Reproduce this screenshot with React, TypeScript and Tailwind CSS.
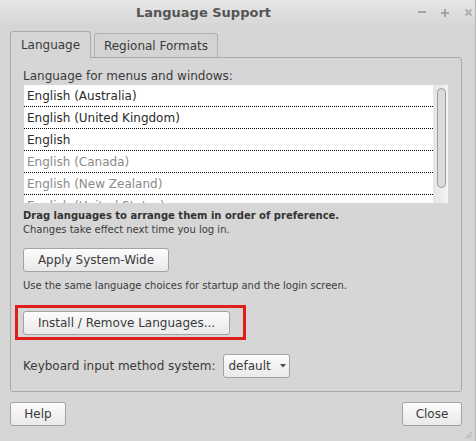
import React from 'react';

const languages = [
    { name: 'English (Australia)', active: true },
    { name: 'English (United Kingdom)', active: true },
    { name: 'English', active: true },
    { name: 'English (Canada)', active: false },
    { name: 'English (New Zealand)', active: false },
    { name: 'English (United States)', active: false },
];

function GtkButton({ children, className = '' }: { children: React.ReactNode; className?: string }) {
    return (
        <button
            type="button"
            className={`h-[24px] rounded-[3px] border border-[#a3a3a3] bg-gradient-to-b from-[#fcfcfc] to-[#e9e9e9] text-[12px] text-[#3a3a3a] leading-none ${className}`}
        >
            {children}
        </button>
    );
}

export default function App() {
    return (
        <div
            className="w-[476px] h-[441px] bg-[#d6d6d6] border-r border-[#b4b4b4] flex flex-col text-[#3c3c3c] overflow-hidden"
            style={{ fontFamily: '"DejaVu Sans", "Liberation Sans", sans-serif' }}
        >
            {/* Title bar */}
            <div className="h-[26px] flex items-center bg-gradient-to-b from-[#e6e6e6] to-[#d6d6d6] shrink-0">
                <div className="flex-1 text-center text-[13px] font-bold text-[#555] pl-[2px]">Language Support</div>
                <div className="flex items-center w-[70px] h-full">
                    <svg width="70" height="26" viewBox="0 0 70 26">
                        <rect x="13" y="11" width="8" height="2" fill="#a4a4a4" />
                        <rect x="36" y="12" width="8" height="2" fill="#a4a4a4" />
                        <rect x="39" y="9" width="2" height="8" fill="#a4a4a4" />
                        <path d="M60.5 9.5 L66.5 15.5 M66.5 9.5 L60.5 15.5" stroke="#b0b0b0" strokeWidth="2" />
                    </svg>
                </div>
            </div>

            <div className="flex flex-col pl-[10px] pr-[13px]">
                {/* Tabs */}
                <div className="flex items-end mt-[5px] h-[26px]">
                    <div className="h-[27px] -mb-[1px] relative z-10 w-[81px] rounded-t-[3px] border border-b-0 border-[#a9a9a9] bg-[#d6d6d6] flex items-center justify-center text-[12px] text-[#3a3a3a]">
                        Language
                    </div>
                    <div className="ml-[3px] h-[24px] w-[124px] rounded-t-[3px] border border-b-0 border-[#b0b0b0] bg-[#d3d3d3] flex items-center justify-center text-[12px] text-[#3a3a3a]">
                        Regional Formats
                    </div>
                </div>

                {/* Panel */}
                <div className="h-[335px] rounded-b-[3px] rounded-tr-[3px] border border-[#a9a9a9] flex flex-col pl-[12px] pr-[13px]">
                    <div className="mt-[11px] text-[12px] leading-[15px] text-[#3a3a3a]">Language for menus and windows:</div>
                    <div className="mt-[1px] ml-[1px] h-[118px] flex overflow-hidden">
                        <div className="flex-1 bg-white overflow-hidden">
                            {languages.map((lang) => (
                                <div
                                    key={lang.name}
                                    className={`h-[22px] shrink-0 border-b border-dotted border-black pl-[3px] flex items-center text-[12px] ${lang.active ? 'text-[#2a2a2a]' : 'text-[#8a8a8a]'}`}
                                >
                                    {lang.name}
                                </div>
                            ))}
                        </div>
                        <div className="w-[15px] bg-gradient-to-r from-[#e4e4e4] to-[#f4f4f4] pt-[3px] pl-[4px]">
                            <div className="w-[9px] h-[100px] rounded-full border border-[#9a9a9a] bg-[#dcdcdc]" />
                        </div>
                    </div>

                    <div className="mt-[6px] text-[10px] leading-[14px] font-bold text-[#333]">
                        Drag languages to arrange them in order of preference.
                    </div>
                    <div className="text-[10px] leading-[14px] text-[#3c3c3c]">Changes take effect next time you log in.</div>

                    <GtkButton className="mt-[11px] w-[146px]">Apply System-Wide</GtkButton>

                    <div className="mt-[7px] text-[10px] leading-[14px] text-[#3c3c3c]">
                        Use the same language choices for startup and the login screen.
                    </div>

                    <div className="relative mt-[17px] w-[207px]">
                        <GtkButton className="w-[207px]">Install / Remove Languages...</GtkButton>
                        <div className="absolute -left-[8px] -top-[5px] w-[231px] h-[35px] border-[3px] border-[#e01f1b]" />
                    </div>

                    <div className="mt-[19px] flex items-center">
                        <span className="text-[12px] text-[#3a3a3a]">Keyboard input method system:</span>
                        <button
                            type="button"
                            className="ml-[7px] h-[24px] w-[67px] rounded-[3px] border border-[#a3a3a3] bg-gradient-to-b from-[#fcfcfc] to-[#e9e9e9] flex items-center pl-[5px] text-[12px] text-[#3a3a3a]"
                        >
                            default
                            <svg className="ml-[9px]" width="6" height="4" viewBox="0 0 6 4">
                                <path d="M0 0 H6 L3 3.5 Z" fill="#4a4a4a" />
                            </svg>
                        </button>
                    </div>
                </div>

                {/* Footer */}
                <div className="mt-[10px] flex justify-between">
                    <GtkButton className="w-[56px]">Help</GtkButton>
                    <GtkButton className="w-[60px]">Close</GtkButton>
                </div>
            </div>

            <div className="flex-1 flex items-end justify-end pr-[3px] pb-[2px]">
                <svg width="8" height="8" viewBox="0 0 8 8">
                    <path d="M7.5 1 L1 7.5 M7.5 4 L4 7.5 M7.5 7 L7 7.5" stroke="#a0a0a0" strokeWidth="1" />
                </svg>
            </div>
        </div>
    );
}
